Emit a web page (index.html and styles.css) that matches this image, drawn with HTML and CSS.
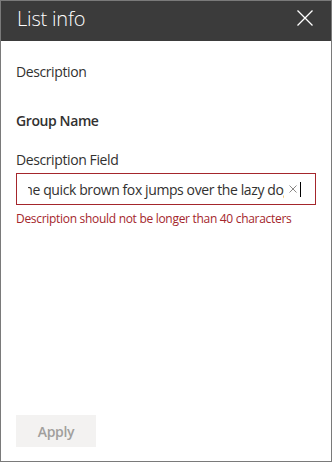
FILE: index.html
```html
<!DOCTYPE html>
<html lang="en">

<head>
    <meta charset="UTF-8">
    <meta name="viewport" content="width=device-width, initial-scale=1.0">
    <title>List info</title>
    <link rel="stylesheet" href="styles.css">
</head>

<body>
    <div class="panel">
        <div class="header">
            <h1>List info</h1>
            <button class="close-btn" aria-label="Close">
                <svg width="16" height="16" viewBox="0 0 16 16">
                    <path d="M0.5 0.5 L15.5 15.5 M15.5 0.5 L0.5 15.5" stroke="#fff" stroke-width="1.3" fill="none" />
                </svg>
            </button>
        </div>

        <div class="content">
            <div class="desc">Description</div>
            <div class="group-name">Group Name</div>

            <label class="field-label">Description Field</label>
            <div class="text-field">
                <div class="text-value"><span>The quick brown fox jumps over the lazy dog</span></div>
                <span class="clear-icon">
                    <svg width="8" height="8" viewBox="0 0 8 8">
                        <path d="M0.5 0.5 L7.5 7.5 M7.5 0.5 L0.5 7.5" stroke="#8a8886" stroke-width="1" fill="none" />
                    </svg>
                </span>
                <span class="caret"></span>
            </div>
            <div class="error-msg">Description should not be longer than 40 characters</div>
        </div>

        <div class="footer">
            <button class="btn-apply" disabled>Apply</button>
        </div>
    </div>
</body>

</html>
```

FILE: styles.css
```css
* {
    margin: 0;
    padding: 0;
    box-sizing: border-box;
}

body {
    font-family: 'Open Sans', 'Noto Sans', Arial, sans-serif;
    background: #fff;
}

.panel {
    display: flex;
    flex-direction: column;
    width: 332px;
    height: 462px;
    border: 1px solid #7a7a7a;
    background: #fff;
}

.header {
    height: 40px;
    background: #3b3b3b;
    color: white;
    padding: 0 18px 0 16px;
    display: flex;
    justify-content: space-between;
    align-items: center;
}

.header h1 {
    font-size: 20px;
    font-weight: 300;
    line-height: 28px;
    letter-spacing: -0.2px;
    margin-top: -4px;
}

.close-btn {
    background: none;
    border: none;
    width: 16px;
    height: 16px;
    display: flex;
    margin-top: -6px;
}

.content {
    padding: 21px 15px 0 15px;
    color: #323130;
    font-size: 14px;
    letter-spacing: -0.4px;
}

.desc {
    line-height: 20px;
}

.group-name {
    line-height: 20px;
    font-weight: 600;
    margin-top: 29px;
}

.field-label {
    display: block;
    line-height: 20px;
    margin-top: 19px;
}

.text-field {
    display: flex;
    align-items: center;
    height: 32px;
    margin-top: 3px;
    border: 1px solid #a4262c;
    padding: 0 14px 0 11px;
}

.text-value {
    flex: 1;
    overflow: hidden;
    white-space: nowrap;
}

.text-value span {
    display: inline-block;
    margin-left: -11px;
}

.clear-icon {
    display: flex;
    margin-left: 5px;
}

.caret {
    width: 1px;
    height: 15px;
    background: #000;
    margin-left: 3px;
}

.error-msg {
    margin-top: 6px;
    font-size: 12px;
    line-height: 16px;
    letter-spacing: -0.3px;
    color: #a4262c;
}

.footer {
    margin-top: auto;
    padding: 0 15px 14px;
}

.btn-apply {
    width: 80px;
    height: 32px;
    border: none;
    background: #f3f2f1;
    color: #a19f9d;
    font-family: inherit;
    font-size: 14px;
    font-weight: 600;
    letter-spacing: -0.3px;
}
```
